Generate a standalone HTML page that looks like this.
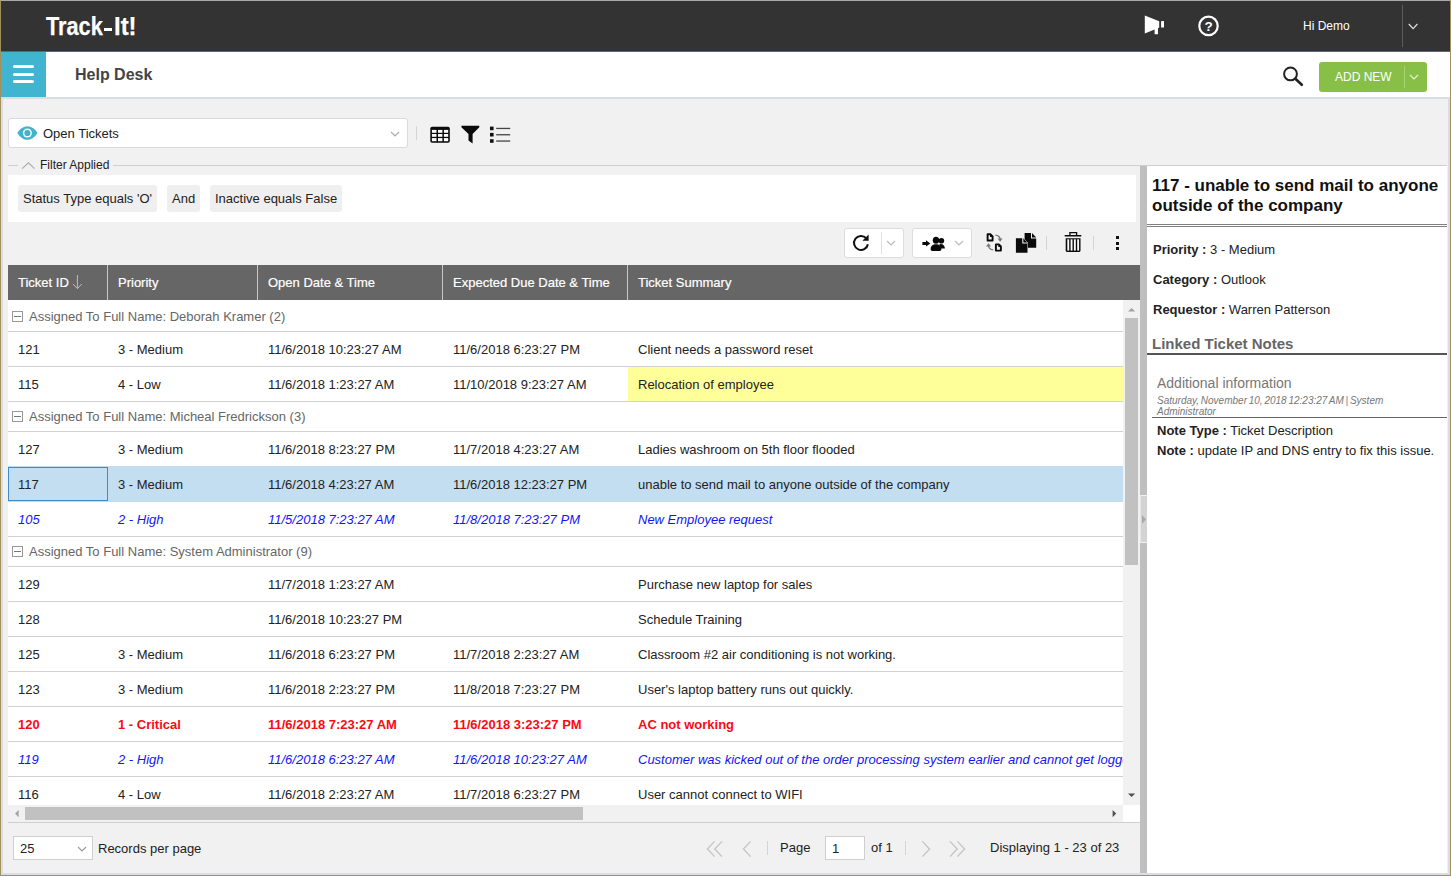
<!DOCTYPE html>
<html>
<head>
<meta charset="utf-8">
<title>Track-It! Help Desk</title>
<style>
*{box-sizing:border-box;margin:0;padding:0}
html,body{width:1451px;height:876px;overflow:hidden}
body{font-family:"Liberation Sans",sans-serif;font-size:13px;color:#222;background:#f1f1f1;position:relative}
.abs{position:absolute}
#frame{position:absolute;left:0;top:0;width:1451px;height:876px;border:1px solid #a4905a;border-top-color:#a9a9a9;pointer-events:none;z-index:50}
#inner{position:absolute;left:1px;top:97px;width:1449px;height:778px;border:2px solid #d9dee5;border-top-width:2px;pointer-events:none;z-index:40}
#top{position:absolute;left:1px;top:1px;width:1449px;height:50px;background:#333}
#topline{position:absolute;left:1px;top:51px;width:1449px;height:1px;background:#5a7a20}
#bar{position:absolute;left:1px;top:52px;width:1449px;height:45px;background:#fff}
#burger{position:absolute;left:1px;top:52px;width:45px;height:45px;background:#41b5d0}
#burger i{position:absolute;left:12px;width:21px;height:3px;border-radius:1.5px;background:#fff}
#logo{position:absolute;left:46px;top:11px;font-weight:bold;font-size:25px;line-height:30px;color:#fff;transform-origin:0 50%;white-space:nowrap}
.t{position:absolute;white-space:nowrap;line-height:16px}

#logo{transform:scaleX(0.925);-webkit-text-stroke:0.6px #fff;top:12.5px;letter-spacing:0}
.vsep{position:absolute;width:1px;background:#d4d4d4}
.combo{position:absolute;background:#fff;border:1px solid #d9d9d9;border-radius:3px}
.chip{position:absolute;top:185px;height:27px;line-height:27px;background:#efefef;border-radius:3px;padding:0 6px;white-space:nowrap;color:#222}
#filterbox{position:absolute;left:8px;top:175px;width:1128px;height:47px;background:#fff}
#gridhead{position:absolute;left:8px;top:265px;width:1132px;height:35px;background:#666;color:#fff}
#gridhead span{position:absolute;top:-0.5px;line-height:35px;-webkit-text-stroke:0.2px #fff;white-space:nowrap}
#gridhead b{position:absolute;top:0;width:1px;height:35px;background:#c8c8c8}
#rows{position:absolute;left:8px;top:300px;width:1115px;height:505px;background:#fff;overflow:hidden}
.r{position:absolute;left:0;width:1115px;height:35px;border-bottom:1px solid #d0d0d0;line-height:35px;white-space:nowrap}
.r span{position:absolute;top:0;white-space:nowrap}
.g{position:absolute;left:0;width:1115px;border-bottom:1px solid #d0d0d0;color:#666;white-space:nowrap}
.g span{position:absolute;left:21px;top:0}.g1 span{top:1px}.g1 i{margin-top:1px}
.g i{position:absolute;left:4px;width:11px;height:11px;border:1px solid #999;background:#fff}
.g i:after{content:"";position:absolute;left:1px;top:4px;width:7px;height:1px;background:#777}
.c1{left:10px}.c2{left:110px}.c3{left:260px}.c4{left:445px}.c5{left:630px}
.blue{color:#1414fa;font-style:italic}
.red{color:#fa0a14;font-weight:bold}

.sel{background:#c3ddf1;border-bottom-color:#c3ddf1 !important;margin-top:-1px;height:36px !important;padding-top:0}
.sel span{top:1px}
.focus{position:absolute;left:0;top:1px;width:100px;height:34px;border:1px solid #3c8aca}
.lg{position:absolute;top:11.1px;font-weight:bold;font-size:25.4px;line-height:30px;color:#fff;transform-origin:0 50%;white-space:nowrap;-webkit-text-stroke:0.25px #fff}
.chip{padding:0 5px}
</style>
</head>
<body>
<div id="top"></div>
<div id="topline"></div>
<div id="bar"></div>
<div id="burger"><i style="top:13px"></i><i style="top:20.5px"></i><i style="top:28px"></i></div>
<div class="lg" style="left:45.6px;transform:scaleX(0.856)">Track</div><div class="abs" style="left:104px;top:27.8px;width:8px;height:3.2px;background:#fff"></div><div class="lg" style="left:113.6px;transform:scaleX(0.94)">It!</div>

<!-- top bar right -->
<svg class="abs" style="left:1140px;top:10px" width="30" height="30" viewBox="0 0 30 30"><path d="M4.8 5.6 L19.2 11.3 L19.2 17.7 L18 18.1 L18 24.3 L14.6 24.3 L14.6 19.6 L4.8 23.4 Z" fill="#fff"/><rect x="21.1" y="11.1" width="2.9" height="6.4" fill="#fff"/></svg>
<svg class="abs" style="left:1196px;top:13px" width="26" height="26" viewBox="0 0 26 26"><circle cx="12.5" cy="12.9" r="9.2" fill="none" stroke="#fff" stroke-width="2.2"/><text x="12.5" y="17.7" font-family="Liberation Sans" font-weight="bold" font-size="13.5" fill="#fff" text-anchor="middle">?</text></svg>
<div class="t" style="left:1303px;top:18px;font-size:12px;color:#fff">Hi Demo</div>
<div class="vsep" style="left:1402px;top:5px;height:42px;background:#5c5c5c"></div>
<svg class="abs" style="left:1406px;top:20px" width="14" height="12" viewBox="0 0 14 12"><path d="M2.8 4 L7.1 8.6 L11.4 4" fill="none" stroke="#ddd" stroke-width="1.3"/></svg>

<!-- title bar -->
<div class="t" style="left:75px;top:65px;font-size:16px;line-height:20px;font-weight:bold;color:#444">Help Desk</div>
<svg class="abs" style="left:1280px;top:63px" width="26" height="26" viewBox="0 0 26 26"><circle cx="10.5" cy="10.9" r="6.4" fill="none" stroke="#222" stroke-width="2"/><path d="M15.4 15.8 L21.8 21.8" stroke="#222" stroke-width="2.6" stroke-linecap="round"/></svg>
<div class="abs" style="left:1319px;top:62px;width:108px;height:30px;background:#88bf47;border-radius:3px"></div>
<div class="t" style="left:1335px;top:69px;font-size:12px;line-height:17px;color:#fff">ADD NEW</div>
<div class="vsep" style="left:1404px;top:66px;height:22px;background:#a9d277"></div>
<svg class="abs" style="left:1407px;top:71px" width="14" height="12" viewBox="0 0 14 12"><path d="M3 4 L7 8 L11 4" fill="none" stroke="#e4f2d2" stroke-width="1.2"/></svg>

<!-- view combo -->
<div class="combo" style="left:8px;top:118px;width:400px;height:30px"></div>
<svg class="abs" style="left:16px;top:124px" width="24" height="18" viewBox="0 0 24 18"><path d="M1.3 9 C4 4.4 7.6 2.2 11.4 2.2 C15.2 2.2 18.8 4.4 21.5 9 C18.8 13.6 15.2 15.8 11.4 15.8 C7.6 15.8 4 13.6 1.3 9 Z" fill="#41b3cc"/><circle cx="11.4" cy="9" r="4.5" fill="#fff"/><circle cx="11.4" cy="9" r="3.1" fill="#41b3cc"/></svg>
<div class="t" style="left:43px;top:126px">Open Tickets</div>
<svg class="abs" style="left:388px;top:128px" width="14" height="12" viewBox="0 0 14 12"><path d="M3 4 L7 8 L11 4" fill="none" stroke="#aaa" stroke-width="1.2"/></svg>
<div class="vsep" style="left:416px;top:126px;height:14px"></div>
<!-- table icon -->
<svg class="abs" style="left:430px;top:126px" width="21" height="18" viewBox="0 0 21 18"><rect x="0.3" y="0.8" width="19.5" height="16" rx="1.8" fill="#0a0a0a"/><g fill="#fff"><rect x="1.9" y="3.9" width="4.6" height="2.9"/><rect x="1.9" y="8.0" width="4.6" height="2.8"/><rect x="1.9" y="12.1" width="4.6" height="3.1"/><rect x="8.0" y="3.9" width="4.4" height="2.9"/><rect x="8.0" y="8.0" width="4.4" height="2.8"/><rect x="8.0" y="12.1" width="4.4" height="3.1"/><rect x="13.9" y="3.9" width="4.3" height="2.9"/><rect x="13.9" y="8.0" width="4.3" height="2.8"/><rect x="13.9" y="12.1" width="4.3" height="3.1"/></g></svg>
<!-- filter icon -->
<svg class="abs" style="left:460px;top:124px" width="22" height="21" viewBox="0 0 22 21"><path d="M1.4 1.8 H19.3 V3.2 L12.6 10 V19.5 L8.5 16.4 V10 L1.4 3.2 Z" fill="#0a0a0a"/></svg>
<!-- list icon -->
<svg class="abs" style="left:489px;top:125.4px" width="23" height="20" viewBox="0 0 23 20"><g fill="#111"><rect x="1" y="1.6" width="3.6" height="3.6"/><rect x="1" y="7.9" width="3.6" height="3.6"/><rect x="1" y="14.2" width="3.6" height="3.6"/></g><g fill="#444"><rect x="7.2" y="2.8" width="14" height="1.3"/><rect x="7.2" y="9.1" width="14" height="1.3"/><rect x="7.2" y="15.4" width="14" height="1.3"/></g></svg>

<!-- filter applied -->
<div class="abs" style="left:8px;top:165px;width:1439px;height:1px;background:#cfcfcf"></div>
<div class="abs" style="left:18px;top:158px;width:95px;height:15px;background:#f1f1f1"></div>
<svg class="abs" style="left:21px;top:160px" width="15" height="11" viewBox="0 0 15 11"><path d="M1.2 8.6 L7.4 2.8 L13.6 8.6" fill="none" stroke="#aaa" stroke-width="1.1"/></svg>
<div class="t" style="left:40px;top:157px;font-size:12px">Filter Applied</div>
<div id="filterbox"></div>
<div class="chip" style="left:18px">Status Type equals 'O'</div>
<div class="chip" style="left:167px">And</div>
<div class="chip" style="left:210px">Inactive equals False</div>

<!-- grid toolbar -->
<div class="combo" style="left:844px;top:228px;width:60px;height:30px;border-color:#dcdcdc"></div>
<svg class="abs" style="left:850px;top:232px" width="22" height="22" viewBox="0 0 22 22"><path d="M16.2 6.2 A7 7 0 1 0 17.9 12.2" fill="none" stroke="#111" stroke-width="2"/><path d="M18.6 2.6 L18.6 8.8 L12.4 8.8 Z" fill="#111"/></svg>
<div class="vsep" style="left:881px;top:232px;height:22px;background:#e0e0e0"></div>
<svg class="abs" style="left:884px;top:237px" width="14" height="12" viewBox="0 0 14 12"><path d="M3 4 L7 8 L11 4" fill="none" stroke="#bbb" stroke-width="1.2"/></svg>
<div class="combo" style="left:912px;top:228px;width:60px;height:30px;border-color:#dcdcdc"></div>
<svg class="abs" style="left:920px;top:233px" width="28" height="20" viewBox="0 0 28 20"><g fill="#0a0a0a"><path d="M2.4 8.9 L6 8.9 L6 7.2 L10.3 10.4 L6 13.6 L6 11.9 L2.4 11.9 Z"/><circle cx="21.4" cy="7.7" r="2.8"/><path d="M19.4 11 C22.6 10.4 24.9 12.2 24.9 15.6 L20.6 15.6 Z"/><ellipse cx="16" cy="7.3" rx="3.2" ry="3.5"/><path d="M10.6 16.2 C10.6 12.8 12.8 11.2 16 11.2 C19.2 11.2 21.4 12.8 21.4 16.2 C21.4 17.4 20.4 18 19 18 L13 18 C11.6 18 10.6 17.4 10.6 16.2 Z"/></g></svg>
<svg class="abs" style="left:952px;top:237px" width="14" height="12" viewBox="0 0 14 12"><path d="M3 4 L7 8 L11 4" fill="none" stroke="#bbb" stroke-width="1.2"/></svg>
<!-- convert icon -->
<svg class="abs" style="left:985px;top:232px" width="20" height="22" viewBox="0 0 20 22"><g fill="none" stroke="#0a0a0a" stroke-width="1.9" stroke-linejoin="round"><path d="M2.6 2.3 L5.6 2.3 L7.6 4.3 L7.6 8.5 L2.6 8.5 Z"/><path d="M10.9 12.4 L13.9 12.4 L15.9 14.4 L15.9 18.6 L10.9 18.6 Z"/></g><g fill="#0a0a0a"><path d="M5 2.3 L5 5 L7.6 5 L7.6 4.3 L5.6 2.3Z"/><path d="M13.3 12.4 L13.3 15.1 L15.9 15.1 L15.9 14.4 L13.9 12.4Z"/></g><g fill="none" stroke="#777" stroke-width="1.3"><path d="M10.4 3.2 C13.4 3.4 15 5 15.2 7.8"/><path d="M8.2 17.8 C5.2 17.6 3.6 16 3.4 13.2"/></g><g fill="#777"><path d="M12.6 6.6 L17.6 6.6 L15.1 9.8 Z"/><path d="M1 14.4 L6 14.4 L3.5 11.2 Z"/></g></svg>
<!-- copy icon -->
<svg class="abs" style="left:1014px;top:231px" width="25" height="24" viewBox="0 0 25 24"><g fill="#0a0a0a"><path d="M10.6 2 L17 2 L17 7.4 L22.2 7.4 L22.2 16.7 L10.6 16.7 Z"/><path d="M18 2 L22.2 6.4 L18 6.4 Z"/></g><g fill="#0a0a0a" stroke="#f1f1f1" stroke-width="1" paint-order="stroke"><path d="M1.9 7.2 L8.3 7.2 L8.3 12.6 L13.5 12.6 L13.5 21.7 L1.9 21.7 Z"/><path d="M9.3 7.2 L13.5 11.6 L9.3 11.6 Z"/></g></svg>
<div class="vsep" style="left:1046px;top:236px;height:14px"></div>
<!-- trash -->
<svg class="abs" style="left:1062px;top:230px" width="22" height="24" viewBox="0 0 22 24"><path d="M7.9 5.2 L7.9 2.7 L14.6 2.7 L14.6 5.2" fill="none" stroke="#0a0a0a" stroke-width="1.3"/><rect x="2.7" y="5" width="16.6" height="1.5" fill="#0a0a0a"/><path d="M3.7 8.2 L18.5 8.2 L18.5 20.6 Q18.5 21.9 17.2 21.9 L5 21.9 Q3.7 21.9 3.7 20.6 Z" fill="#0a0a0a"/><g fill="#fbfbfb"><rect x="5.3" y="9.3" width="1.9" height="11.3"/><rect x="8.6" y="9.3" width="1.9" height="11.3"/><rect x="11.9" y="9.3" width="1.9" height="11.3"/><rect x="15.2" y="9.3" width="1.9" height="11.3"/></g></svg>
<div class="vsep" style="left:1093px;top:236px;height:14px"></div>
<div class="abs" style="left:1116px;top:236px;width:3px;height:3px;background:#111"></div>
<div class="abs" style="left:1116px;top:241.5px;width:3px;height:3px;background:#111"></div>
<div class="abs" style="left:1116px;top:247px;width:3px;height:3px;background:#111"></div>

<!-- grid -->
<div id="gridhead">
<span style="left:10px">Ticket ID</span>
<svg class="abs" style="left:63px;top:9px" width="13" height="16" viewBox="0 0 13 16"><path d="M6.4 1 L6.4 14.4 M2 10 L6.4 14.6 L10.8 10" fill="none" stroke="#bdbdbd" stroke-width="1"/></svg>
<b style="left:99px"></b><span style="left:110px">Priority</span>
<b style="left:249px"></b><span style="left:260px">Open Date &amp; Time</span>
<b style="left:434px"></b><span style="left:445px">Expected Due Date &amp; Time</span>
<b style="left:619px"></b><span style="left:630px">Ticket Summary</span>
</div>
<div id="rows">
<div class="g g1" style="top:0px;height:32px;line-height:31px"><i style="top:10px"></i><span>Assigned To Full Name: Deborah Kramer (2)</span></div>
<div class="r " style="top:32px"><span class="c1">121</span><span class="c2">3 - Medium</span><span class="c3">11/6/2018 10:23:27 AM</span><span class="c4">11/6/2018 6:23:27 PM</span><span class="c5">Client needs a password reset</span></div>
<div class="r " style="top:67px"><div style="position:absolute;left:620px;top:0;width:495px;height:34px;background:#ffff99"></div><span class="c1">115</span><span class="c2">4 - Low</span><span class="c3">11/6/2018 1:23:27 AM</span><span class="c4">11/10/2018 9:23:27 AM</span><span class="c5">Relocation of employee</span></div>
<div class="g" style="top:102px;height:30px;line-height:29px"><i style="top:9px"></i><span>Assigned To Full Name: Micheal Fredrickson (3)</span></div>
<div class="r " style="top:132px"><span class="c1">127</span><span class="c2">3 - Medium</span><span class="c3">11/6/2018 8:23:27 PM</span><span class="c4">11/7/2018 4:23:27 AM</span><span class="c5">Ladies washroom on 5th floor flooded</span></div>
<div class="r sel" style="top:167px"><div class="focus"></div><span class="c1">117</span><span class="c2">3 - Medium</span><span class="c3">11/6/2018 4:23:27 AM</span><span class="c4">11/6/2018 12:23:27 PM</span><span class="c5">unable to send mail to anyone outside of the company</span></div>
<div class="r blue" style="top:202px"><span class="c1">105</span><span class="c2">2 - High</span><span class="c3">11/5/2018 7:23:27 AM</span><span class="c4">11/8/2018 7:23:27 PM</span><span class="c5">New Employee request</span></div>
<div class="g" style="top:237px;height:30px;line-height:29px"><i style="top:9px"></i><span>Assigned To Full Name: System Administrator (9)</span></div>
<div class="r " style="top:267px"><span class="c1">129</span><span class="c3">11/7/2018 1:23:27 AM</span><span class="c5">Purchase new laptop for sales</span></div>
<div class="r " style="top:302px"><span class="c1">128</span><span class="c3">11/6/2018 10:23:27 PM</span><span class="c5">Schedule Training</span></div>
<div class="r " style="top:337px"><span class="c1">125</span><span class="c2">3 - Medium</span><span class="c3">11/6/2018 6:23:27 PM</span><span class="c4">11/7/2018 2:23:27 AM</span><span class="c5">Classroom #2 air conditioning is not working.</span></div>
<div class="r " style="top:372px"><span class="c1">123</span><span class="c2">3 - Medium</span><span class="c3">11/6/2018 2:23:27 PM</span><span class="c4">11/8/2018 7:23:27 PM</span><span class="c5">User's laptop battery runs out quickly.</span></div>
<div class="r red" style="top:407px"><span class="c1">120</span><span class="c2">1 - Critical</span><span class="c3">11/6/2018 7:23:27 AM</span><span class="c4">11/6/2018 3:23:27 PM</span><span class="c5">AC not working</span></div>
<div class="r blue" style="top:442px"><span class="c1">119</span><span class="c2">2 - High</span><span class="c3">11/6/2018 6:23:27 AM</span><span class="c4">11/6/2018 10:23:27 AM</span><span class="c5">Customer was kicked out of the order processing system earlier and cannot get logged in again</span></div>
<div class="r " style="top:477px"><span class="c1">116</span><span class="c2">4 - Low</span><span class="c3">11/6/2018 2:23:27 AM</span><span class="c4">11/7/2018 6:23:27 PM</span><span class="c5">User cannot connect to WIFI</span></div>
</div>
<!-- scrollbars -->
<div class="abs" style="left:1123px;top:300px;width:17px;height:505px;background:#f1f1f1"></div>
<div class="abs" style="left:1125px;top:318px;width:13px;height:247px;background:#c1c1c1"></div>
<svg class="abs" style="left:1123px;top:300px" width="17" height="17" viewBox="0 0 17 17"><path d="M5 11.6 L8.6 8 L12.2 11.6 Z" fill="#a3a3a3"/></svg>
<svg class="abs" style="left:1123px;top:788px" width="17" height="17" viewBox="0 0 17 17"><path d="M5 5.4 L8.6 9 L12.2 5.4 Z" fill="#505050"/></svg>
<div class="abs" style="left:8px;top:805px;width:1115px;height:17px;background:#f1f1f1"></div>
<div class="abs" style="left:25px;top:807px;width:558px;height:13px;background:#c1c1c1"></div>
<svg class="abs" style="left:8px;top:805px" width="17" height="17" viewBox="0 0 17 17"><path d="M10.6 5 L7 8.6 L10.6 12.2 Z" fill="#a3a3a3"/></svg>
<svg class="abs" style="left:1106px;top:805px" width="17" height="17" viewBox="0 0 17 17"><path d="M6.6 5 L10.2 8.6 L6.6 12.2 Z" fill="#505050"/></svg>
<div class="abs" style="left:1123px;top:805px;width:17px;height:17px;background:#fff"></div>
<div class="abs" style="left:8px;top:822px;width:1132px;height:1px;background:#d0d0d0"></div>

<!-- pager -->
<div class="combo" style="left:13px;top:836px;width:80px;height:24px;border-radius:0;border-color:#cfcfcf"></div>
<div class="t" style="left:20px;top:841px">25</div>
<svg class="abs" style="left:74.5px;top:842.5px" width="14" height="12" viewBox="0 0 14 12"><path d="M3 4 L7 8 L11 4" fill="none" stroke="#999" stroke-width="1.1"/></svg>
<div class="t" style="left:98px;top:841px">Records per page</div>
<svg class="abs" style="left:704px;top:839px" width="22" height="20" viewBox="0 0 22 20"><path d="M10.6 2.4 L3.4 10 L10.6 17.6 M18 2.4 L10.8 10 L18 17.6" fill="none" stroke="#c4c4c4" stroke-width="1.3"/></svg>
<svg class="abs" style="left:738px;top:839px" width="18" height="20" viewBox="0 0 18 20"><path d="M12.6 2.4 L5.4 10 L12.6 17.6" fill="none" stroke="#c4c4c4" stroke-width="1.3"/></svg>
<div class="vsep" style="left:767px;top:841px;height:14px"></div>
<div class="t" style="left:780px;top:840px">Page</div>
<div class="combo" style="left:825px;top:836px;width:40px;height:24px;border-radius:0;border-color:#cfcfcf"></div>
<div class="t" style="left:832px;top:841px">1</div>
<div class="t" style="left:871px;top:840px">of 1</div>
<div class="vsep" style="left:905px;top:841px;height:14px"></div>
<svg class="abs" style="left:917px;top:839px" width="18" height="20" viewBox="0 0 18 20"><path d="M5.4 2.4 L12.6 10 L5.4 17.6" fill="none" stroke="#c4c4c4" stroke-width="1.3"/></svg>
<svg class="abs" style="left:946px;top:839px" width="22" height="20" viewBox="0 0 22 20"><path d="M4 2.4 L11.2 10 L4 17.6 M11.4 2.4 L18.6 10 L11.4 17.6" fill="none" stroke="#c4c4c4" stroke-width="1.3"/></svg>
<div class="t" style="left:990px;top:840px">Displaying 1 - 23 of 23</div>

<!-- splitter -->
<div class="abs" style="left:1140px;top:166px;width:7px;height:708px;background:#bfbfbf"></div>

<div class="abs" style="left:1140px;top:495px;width:7px;height:48px;background:#d3d3d3;border-top:1px solid #f0f0f0;border-bottom:1px solid #f0f0f0;border-left:1px solid #e6e6e6"></div>
<svg class="abs" style="left:1140px;top:513px" width="7" height="12" viewBox="0 0 7 12"><path d="M2 2 L6 6.4 L2 10.8 Z" fill="#a8a8a8"/></svg>
<!-- detail panel -->
<div class="abs" style="left:1147px;top:166px;width:300px;height:708px;background:#fff"></div>
<div class="abs" style="left:1152px;top:176px;width:294px;font-size:17px;line-height:20px;font-weight:bold;color:#111">117 - unable to send mail to anyone outside of the company</div>
<div class="abs" style="left:1147px;top:224px;width:300px;height:3px;border-top:1px solid #808080;border-bottom:1px solid #808080"></div>
<div class="t" style="left:1153px;top:242px"><b>Priority :</b> 3 - Medium</div>
<div class="t" style="left:1153px;top:272px"><b>Category :</b> Outlook</div>
<div class="t" style="left:1153px;top:302px"><b>Requestor :</b> Warren Patterson</div>
<div class="t" style="left:1152px;top:335px;font-size:15px;line-height:18px;font-weight:bold;color:#666">Linked Ticket Notes</div>
<div class="abs" style="left:1147px;top:353px;width:300px;height:2px;background:#555"></div>
<div class="t" style="left:1157px;top:374px;font-size:14px;line-height:18px;color:#777">Additional information</div>
<div class="abs" style="left:1157px;top:395px;width:260px;font-size:10px;line-height:11px;font-style:italic;color:#777;word-spacing:-1px">Saturday, November 10, 2018 12:23:27 AM | System Administrator</div>
<div class="abs" style="left:1152px;top:417px;width:295px;height:1px;background:#666"></div>
<div class="t" style="left:1157px;top:423px"><b>Note Type :</b> Ticket Description</div>
<div class="t" style="left:1157px;top:443px"><b>Note :</b> update IP and DNS entry to fix this issue.</div>
<div id="inner"></div>
<div id="frame"></div>
</body>
</html>
